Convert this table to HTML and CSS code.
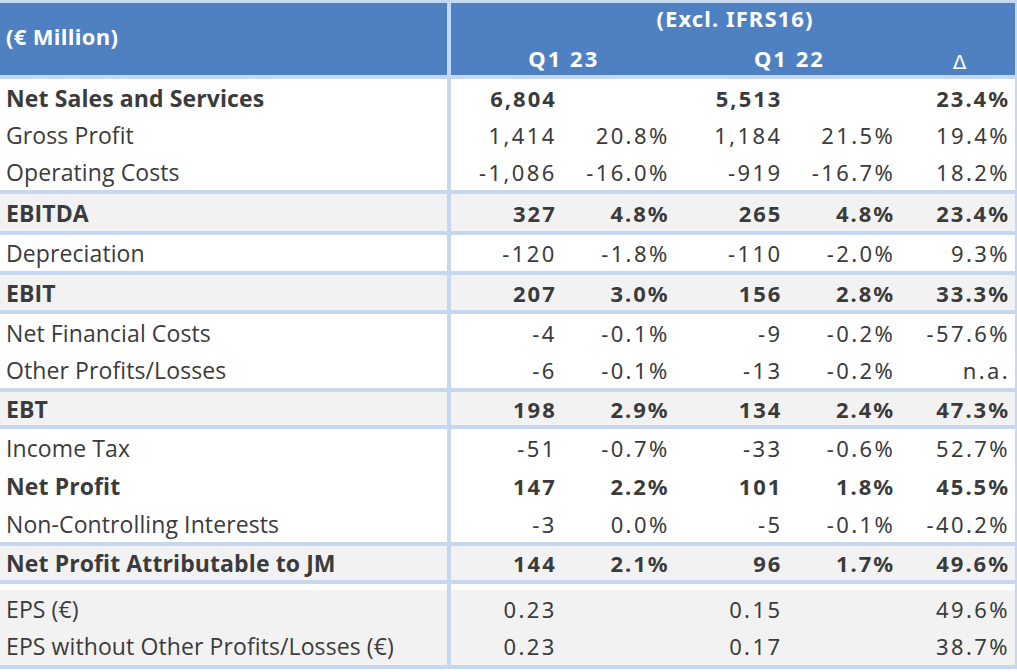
FILE: index.html
```html
<!DOCTYPE html>
<html>
<head>
<meta charset="utf-8">
<link rel="stylesheet" href="styles.css">
</head>
<body>
<div class="pl">
  <div class="head">
    <div class="h-label">(€ Million)</div>
    <div class="h-group">(Excl. IFRS16)</div>
    <div class="h-per">Q1 23</div>
    <div class="h-per">Q1 22</div>
    <div class="h-delta">Δ</div>
  </div>

  <div class="group white">
    <div class="row h37 bold"><div class="lab">Net Sales and Services</div><div class="num">6,804</div><div class="num"></div><div class="num">5,513</div><div class="num"></div><div class="num">23.4%</div></div>
    <div class="row h37"><div class="lab">Gross Profit</div><div class="num">1,414</div><div class="num">20.8%</div><div class="num">1,184</div><div class="num">21.5%</div><div class="num">19.4%</div></div>
    <div class="row h37"><div class="lab">Operating Costs</div><div class="num">-1,086</div><div class="num">-16.0%</div><div class="num">-919</div><div class="num">-16.7%</div><div class="num">18.2%</div></div>
  </div>

  <div class="group gray">
    <div class="row h37 bold"><div class="lab">EBITDA</div><div class="num">327</div><div class="num">4.8%</div><div class="num">265</div><div class="num">4.8%</div><div class="num">23.4%</div></div>
  </div>

  <div class="group white">
    <div class="row h36"><div class="lab">Depreciation</div><div class="num">-120</div><div class="num">-1.8%</div><div class="num">-110</div><div class="num">-2.0%</div><div class="num">9.3%</div></div>
  </div>

  <div class="group gray">
    <div class="row h35 bold"><div class="lab">EBIT</div><div class="num">207</div><div class="num">3.0%</div><div class="num">156</div><div class="num">2.8%</div><div class="num">33.3%</div></div>
  </div>

  <div class="group white">
    <div class="row h37"><div class="lab">Net Financial Costs</div><div class="num">-4</div><div class="num">-0.1%</div><div class="num">-9</div><div class="num">-0.2%</div><div class="num">-57.6%</div></div>
    <div class="row h37"><div class="lab">Other Profits/Losses</div><div class="num">-6</div><div class="num">-0.1%</div><div class="num">-13</div><div class="num">-0.2%</div><div class="num">n.a.</div></div>
  </div>

  <div class="group gray">
    <div class="row h33 bold"><div class="lab">EBT</div><div class="num">198</div><div class="num">2.9%</div><div class="num">134</div><div class="num">2.4%</div><div class="num">47.3%</div></div>
  </div>

  <div class="group white">
    <div class="row h38"><div class="lab">Income Tax</div><div class="num">-51</div><div class="num">-0.7%</div><div class="num">-33</div><div class="num">-0.6%</div><div class="num">52.7%</div></div>
    <div class="row h38 bold"><div class="lab">Net Profit</div><div class="num">147</div><div class="num">2.2%</div><div class="num">101</div><div class="num">1.8%</div><div class="num">45.5%</div></div>
    <div class="row h37"><div class="lab">Non-Controlling Interests</div><div class="num">-3</div><div class="num">0.0%</div><div class="num">-5</div><div class="num">-0.1%</div><div class="num">-40.2%</div></div>
  </div>

  <div class="group gray">
    <div class="row h34 bold"><div class="lab">Net Profit Attributable to JM</div><div class="num">144</div><div class="num">2.1%</div><div class="num">96</div><div class="num">1.7%</div><div class="num">49.6%</div></div>
  </div>

  <div class="group gray last">
    <div class="row spacer"><div class="lab"></div></div>
    <div class="row h37"><div class="lab">EPS (€)</div><div class="num">0.23</div><div class="num"></div><div class="num">0.15</div><div class="num"></div><div class="num">49.6%</div></div>
    <div class="row h38"><div class="lab">EPS without Other Profits/Losses (€)</div><div class="num">0.23</div><div class="num"></div><div class="num">0.17</div><div class="num"></div><div class="num">38.7%</div></div>
  </div>
</div>
</body>
</html>
```

FILE: styles.css
```css
html, body {
  margin: 0;
  padding: 0;
  background: #ffffff;
}

.pl {
  width: 1017px;
  box-sizing: border-box;
  border-top: 3px solid #c6d8ef;
  border-right: 2px solid #c6d8ef;
  color: #3b3b3b;
}

.head {
  display: grid;
  grid-template-columns: 451px repeat(5, 1fr);
  grid-template-rows: 36px 36px;
  background: #4f81c2;
  color: #ffffff;
  font-weight: 700;
  white-space: nowrap;
}

.h-label {
  grid-row: 1 / 3;
  grid-column: 1;
  box-sizing: border-box;
  border-right: 4px solid #c6d8ef;
  padding-left: 6px;
  padding-bottom: 6px;
  display: flex;
  align-items: center;
  font-family: "Open Sans", "Noto Sans", sans-serif;
  font-size: 22px;
  letter-spacing: 0.3px;
}

.h-group {
  grid-row: 1;
  grid-column: 2 / 7;
  display: flex;
  align-items: center;
  justify-content: center;
  padding-left: 4px;
  padding-bottom: 6px;
  font-family: "Noto Sans", "Open Sans", sans-serif;
  font-size: 22px;
  letter-spacing: 1.1px;
}

.h-per {
  grid-row: 2;
  grid-column: span 2;
  display: flex;
  align-items: center;
  justify-content: center;
  padding-top: 2px;
  font-family: "Noto Sans", "Open Sans", sans-serif;
  font-size: 22px;
  letter-spacing: 2px;
}

.h-delta {
  grid-row: 2;
  grid-column: 6;
  display: flex;
  align-items: flex-end;
  justify-content: center;
  padding-bottom: 1px;
  padding-left: 2px;
  font-family: "DejaVu Sans", sans-serif;
  font-size: 20px;
  font-weight: 400;
}

.group {
  border-top: 4px solid #c6d8ef;
}
.group.last {
  border-bottom: 4px solid #c6d8ef;
}

.white .row { background: #ffffff; }
.gray .row { background: #f2f2f2; }
.gray .row.spacer { background: #ffffff; height: 6px; }

.row {
  display: grid;
  grid-template-columns: 451px repeat(5, 1fr);
  white-space: nowrap;
}

.h33 { height: 33px; }
.h34 { height: 34px; }
.h35 { height: 35px; }
.h36 { height: 36px; }
.h37 { height: 37px; }
.h38 { height: 38px; }

.lab {
  box-sizing: border-box;
  border-right: 4px solid #c6d8ef;
  padding-left: 6px;
  display: flex;
  align-items: center;
  font-family: "Open Sans", "Noto Sans", sans-serif;
  font-size: 23px;
  letter-spacing: 0.1px;
}

.num {
  display: flex;
  align-items: center;
  justify-content: flex-end;
  padding-right: 7px;
  font-family: "Noto Sans", "Open Sans", sans-serif;
  font-size: 22px;
  letter-spacing: 2.4px;
}
.num:last-child { padding-right: 5px; }

.bold .lab,
.bold .num {
  font-weight: 700;
}
.bold .num { letter-spacing: 2px; }
```
